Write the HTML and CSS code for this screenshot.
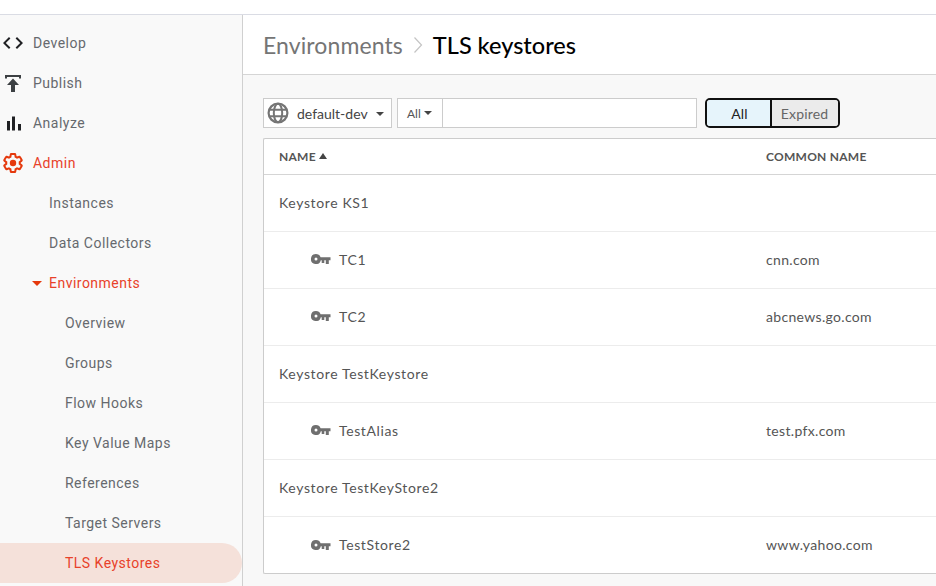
FILE: index.html
```html
<!DOCTYPE html>
<html lang="en">
<head>
  <meta charset="UTF-8">
  <title>TLS keystores</title>
  <link rel="stylesheet" href="styles.css">
</head>
<body>
  <div class="topbar"></div>
  <div class="layout">
    <nav class="sidebar">
      <a class="nav-item">
        <svg class="nav-icon" viewBox="0 0 24 24"><path d="M9.400 16.600 4.800 12l4.600-4.600L8 6l-6 6 6 6zm5.200 0 4.600-4.600-4.600-4.600L16 6l6 6-6 6z" fill="#202124"/></svg>
        Develop
      </a>
      <a class="nav-item">
        <svg class="nav-icon" viewBox="0 0 24 24"><path d="M4 4h16v3.400h-2V6H6v1.400H4z" fill="#3c4043"/><path d="M12 7.500 18 14h-4v7h-4v-7H6z" fill="#3c4043"/></svg>
        Publish
      </a>
      <a class="nav-item">
        <svg class="nav-icon" viewBox="0 0 24 24"><path d="M6 10h3v9.500H6zM11 5.500h3v14h-3zM17 13h3v6.500h-3z" fill="#202124"/></svg>
        Analyze
      </a>
      <a class="nav-item current">
        <svg class="nav-icon" viewBox="0 0 24 24"><circle cx="12" cy="12" r="3.200" fill="#e5390d"/><path transform="translate(1.200 1.200) scale(.9)" fill="none" stroke="#e5390d" stroke-width="2.200" d="M19.430 12.980c.04-.32.07-.64.07-.98s-.03-.66-.07-.98l2.110-1.650c.19-.15.24-.42.12-.64l-2-3.460c-.12-.22-.39-.3-.61-.22l-2.490 1c-.52-.4-1.080-.73-1.690-.98l-.38-2.650C14.460 2.180 14.250 2 14 2h-4c-.25 0-.46.18-.49.42l-.38 2.650c-.61.25-1.170.59-1.690.98l-2.490-1c-.23-.09-.49 0-.61.22l-2 3.460c-.13.22-.07.49.12.64l2.110 1.650c-.04.32-.07.65-.07.98s.03.66.07.98l-2.110 1.650c-.19.15-.24.42-.12.64l2 3.460c.12.22.39.3.61.22l2.490-1c.52.4 1.080.73 1.690.98l.38 2.650c.03.24.24.42.49.42h4c.25 0 .46-.18.49-.42l.38-2.650c.61-.25 1.170-.59 1.690-.98l2.490 1c.23.09.49 0 .61-.22l2-3.460c.12-.22.07-.49-.12-.64l-2.110-1.650z"/></svg>
        Admin
      </a>
      <a class="nav-item sub">Instances</a>
      <a class="nav-item sub">Data Collectors</a>
      <a class="nav-item sub current"><span class="caret"></span>Environments</a>
      <a class="nav-item subsub">Overview</a>
      <a class="nav-item subsub">Groups</a>
      <a class="nav-item subsub">Flow Hooks</a>
      <a class="nav-item subsub">Key Value Maps</a>
      <a class="nav-item subsub">References</a>
      <a class="nav-item subsub">Target Servers</a>
      <a class="nav-item subsub current selected">TLS Keystores</a>
    </nav>

    <main class="main">
      <div class="page-header">
        <span class="crumb">Environments</span>
        <svg class="crumb-sep" viewBox="0 0 10 20"><path d="M1.500 2.500 8.500 10l-7 7.500" fill="none" stroke="#c4c4c4" stroke-width="1.200"/></svg>
        <h1>TLS keystores</h1>
      </div>

      <div class="content">
        <div class="toolbar">
          <button class="env-select">
            <svg class="globe" viewBox="0 0 24 24"><circle cx="12" cy="12" r="9.400" fill="none" stroke="#757575" stroke-width="2.200"/><ellipse cx="12" cy="12" rx="4.200" ry="9.200" fill="none" stroke="#757575" stroke-width="2"/><path d="M3 8.800h18M3 15.200h18" stroke="#757575" stroke-width="2"/></svg>
            <span>default-dev</span>
            <span class="arrow env-arrow"></span>
          </button>
          <div class="search">
            <div class="search-type">All<span class="arrow"></span></div>
            <div class="search-input"></div>
          </div>
          <div class="switch">
            <div class="switch-btn active">All</div>
            <div class="switch-btn">Expired</div>
          </div>
        </div>

        <div class="table">
          <div class="row head">
            <div class="col-name">NAME<span class="sort"></span></div>
            <div class="col-common">COMMON NAME</div>
          </div>
          <div class="row"><div class="col-name">Keystore KS1</div><div class="col-common"></div></div>
          <div class="row">
            <div class="col-name alias"><svg class="key" viewBox="0 0 20 10"><use href="#key"/></svg>TC1</div>
            <div class="col-common">cnn.com</div>
          </div>
          <div class="row">
            <div class="col-name alias"><svg class="key" viewBox="0 0 20 10"><use href="#key"/></svg>TC2</div>
            <div class="col-common">abcnews.go.com</div>
          </div>
          <div class="row"><div class="col-name">Keystore TestKeystore</div><div class="col-common"></div></div>
          <div class="row">
            <div class="col-name alias"><svg class="key" viewBox="0 0 20 10"><use href="#key"/></svg>TestAlias</div>
            <div class="col-common">test.pfx.com</div>
          </div>
          <div class="row"><div class="col-name">Keystore TestKeyStore2</div><div class="col-common"></div></div>
          <div class="row last">
            <div class="col-name alias"><svg class="key" viewBox="0 0 20 10"><use href="#key"/></svg>TestStore2</div>
            <div class="col-common">www.yahoo.com</div>
          </div>
        </div>
      </div>
    </main>
  </div>

  <svg class="defs" width="0" height="0">
    <defs>
      <path id="key" fill="#6f6f6f" fill-rule="evenodd" d="M5 0a5 5 0 0 1 4.600 3.200H19.500v3h-1.700V10h-3V6.200h-1.500V9h-2.600V6.200H9.800A5 5 0 1 1 5 0zm0 3.500a1.500 1.500 0 1 0 0 3 1.500 1.500 0 0 0 0-3z"/>
    </defs>
  </svg>
</body>
</html>
```

FILE: styles.css
```css
html, body {
  height: 100%;
}

body {
  margin: 0;
  overflow: hidden;
  background: #fff;
  font-family: Lato, sans-serif;
  color: #555;
}

.topbar {
  height: 14px;
  background: #fff;
  border-bottom: 1px solid #dadce4;
}

.layout {
  display: flex;
  height: 571px;
}

.sidebar {
  flex: 0 0 242px;
  box-sizing: border-box;
  width: 242px;
  padding-top: 8px;
  background: #f9f9f9;
  font-family: Roboto, sans-serif;
  font-size: 14px;
  letter-spacing: .48px;
  overflow: hidden;
}

.nav-item {
  display: flex;
  align-items: center;
  height: 40px;
  padding-left: 33px;
  color: #66696e;
  position: relative;
  white-space: nowrap;
}

.nav-icon {
  position: absolute;
  left: 1px;
  top: 8px;
  width: 24px;
  height: 24px;
}

.nav-item.current {
  color: #e8412a;
}

.nav-item.sub {
  padding-left: 49px;
}

.nav-item.subsub {
  padding-left: 65px;
}

.nav-item.selected {
  background: #f5e1da;
  border-radius: 0 20px 20px 0;
}

.caret {
  position: absolute;
  left: 32px;
  top: 18px;
  border-left: 5px solid transparent;
  border-right: 5px solid transparent;
  border-top: 5px solid #e5390d;
}

.main {
  flex: 1;
  min-width: 0;
  border-left: 1px solid #d0d0d0;
  display: flex;
  flex-direction: column;
}

.page-header {
  display: flex;
  align-items: center;
  height: 59px;
  padding-left: 20px;
  border-bottom: 1px solid #d5d5d5;
  flex: none;
}

.crumb {
  font-size: 23px;
  color: #757575;
  letter-spacing: .1px;
}

.crumb-sep {
  width: 10px;
  height: 20px;
  margin: 0 10px;
}

.page-header h1 {
  margin: 0;
  font-size: 23.500px;
  font-weight: 500;
  color: #000;
}

.content {
  flex: 1;
  padding: 23px 0 0 20px;
  background: #f8f8f8;
}

.toolbar {
  display: flex;
  align-items: center;
  height: 30px;
  margin-bottom: 10px;
}

.env-select {
  display: flex;
  align-items: center;
  box-sizing: border-box;
  width: 129px;
  height: 30px;
  padding: 0 0 0 2px;
  border: 1px solid #ccc;
  background: #fff;
  font-family: Lato, sans-serif;
  font-size: 14px;
  color: #444;
}

.globe {
  width: 24px;
  height: 24px;
  margin-right: 7px;
}

.arrow {
  display: inline-block;
  margin-left: 3px;
  vertical-align: middle;
  border-left: 4px solid transparent;
  border-right: 4px solid transparent;
  border-top: 4px solid #444;
}

.env-arrow {
  margin-left: 8px;
  margin-top: 2px;
}

.search {
  display: flex;
  box-sizing: border-box;
  width: 300px;
  height: 30px;
  margin-left: 5px;
  border: 1px solid #ccc;
  background: #fff;
}

.search-type {
  display: flex;
  align-items: center;
  width: 45px;
  box-sizing: border-box;
  padding-left: 9px;
  border-right: 1px solid #ccc;
  font-size: 12px;
  color: #555;
}

.search-input {
  flex: 1;
}

.switch {
  display: flex;
  box-sizing: border-box;
  width: 135px;
  height: 30px;
  margin-left: 8px;
  border: 2px solid #111;
  border-radius: 5px;
  overflow: hidden;
  font-size: 14px;
}

.switch-btn {
  display: flex;
  align-items: center;
  justify-content: center;
  background: #ebebeb;
  color: #666;
  letter-spacing: .15px;
}

.switch-btn.active {
  flex: 0 0 65px;
  box-sizing: border-box;
  padding-left: 2px;
  background: #e6f4fb;
  color: #222;
  border-right: 2px solid #111;
}

.switch-btn:last-child {
  flex: 1;
  padding-right: 1px;
}

.table {
  box-sizing: border-box;
  height: 436px;
  border: 1px solid #ccc;
  border-right: 0;
  border-radius: 2px 0 0 2px;
  background: #fff;
  font-size: 14px;
  letter-spacing: .33px;
}

.row {
  display: flex;
  align-items: center;
  box-sizing: border-box;
  height: 57px;
  padding-bottom: 2px;
  border-bottom: 1px solid #ececec;
}

.row.last {
  border-bottom: 0;
}

.row.head {
  height: 36px;
  padding-bottom: 0;
  border-bottom: 1px solid #d5d5d5;
  font-size: 12px;
  font-weight: 700;
  letter-spacing: .25px;
  color: #555;
}

.col-name {
  display: flex;
  align-items: center;
  box-sizing: border-box;
  width: 502px;
  padding-left: 15px;
  flex: none;
}

.row:not(.head) .col-name {
  letter-spacing: .62px;
}

.col-name.alias {
  padding-left: 47px;
}

.key {
  width: 20px;
  height: 10px;
  margin-right: 8px;
}

.sort {
  margin-left: 3px;
  margin-top: -2px;
  border-left: 4px solid transparent;
  border-right: 4px solid transparent;
  border-bottom: 6px solid #444;
}

.defs {
  position: absolute;
}
```
